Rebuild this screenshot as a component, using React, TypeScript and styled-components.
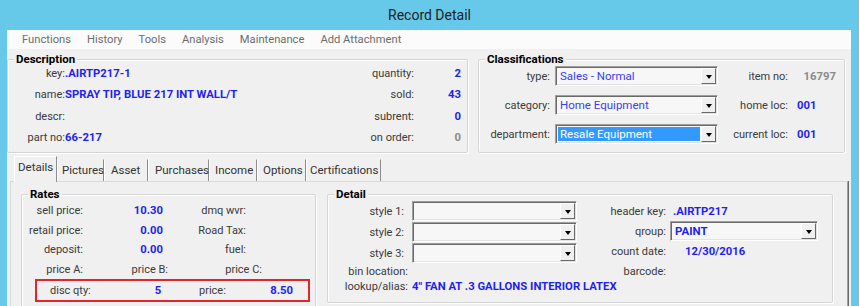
import React from 'react'
import styled, { createGlobalStyle } from 'styled-components'

const GlobalStyle = createGlobalStyle`
	html, body {
		margin: 0;
		padding: 0;
		background: #66c9ea;
		overflow: hidden;
	}
	body {
		font-family: Roboto, "Liberation Sans", Arial, sans-serif;
		font-size: 11px;
		color: #333;
	}
`

const Window = styled.div`
	width: 859px;
	height: 306px;
	background: #66c9ea;
	display: flex;
	flex-direction: column;
	overflow: hidden;
`
const TitleBar = styled.div`
	height: 30px;
	flex: none;
	display: flex;
	align-items: center;
	justify-content: center;
	font-size: 14px;
	color: #1e1e1e;
`
const Client = styled.div`
	flex: 1;
	min-height: 0;
	margin: 0 8px 0 7px;
	background: #f0f0f0;
	display: flex;
	flex-direction: column;
`
const MenuBar = styled.div`
	height: 19px;
	flex: none;
	background: #fbfbfb;
	display: flex;
	align-items: center;
	gap: 16px;
	padding-left: 15px;
	color: #6d6d6d;
	font-size: 11.2px;
`
const TopRow = styled.div`
	display: flex;
	gap: 10px;
	margin-top: 10px;
	flex: none;
`
const Group = styled.div<{ $w: number }>`
	width: ${p => p.$w}px;
	box-sizing: border-box;
	border: 1px solid #d5d5d5;
	border-radius: 2px;
	box-shadow: inset 1px 1px 0 #fff, 1px 1px 0 #fff;
	flex: none;
`
const Legend = styled.div`
	font-weight: bold;
	font-size: 11.5px;
	color: #000;
	line-height: 14px;
	margin: -8px 0 -3px 6px;
	padding: 0 2px;
	background: #f0f0f0;
	width: fit-content;
`
const DescGrid = styled.div`
	display: grid;
	grid-template-columns: 57px 1fr 80px 47px;
	grid-auto-rows: 21.3px;
	align-items: center;
	padding: 0 6px 4px 0;
`
const ClassGrid = styled.div`
	display: grid;
	grid-template-columns: 76px 163px 70px 1fr;
	grid-auto-rows: 20px;
	row-gap: 9px;
	align-items: center;
	margin-top: 3px;
	padding-bottom: 6px;
`
const Label = styled.div<{ $pad?: number; $nudge?: number; $left?: boolean }>`
	text-align: ${p => (p.$left ? 'left' : 'right')};
	padding-right: ${p => p.$pad ?? 0}px;
	margin-right: ${p => -(p.$nudge ?? 0)}px;
	white-space: nowrap;
	color: #3a3a3a;
`
const Value = styled.div<{ $tone?: 'blue' | 'gray'; $right?: boolean; $pad?: number }>`
	font-weight: bold;
	font-size: 11.3px;
	color: ${p => (p.$tone === 'gray' ? '#8a8a8a' : '#1f1ff2')};
	text-align: ${p => (p.$right ? 'right' : 'left')};
	padding-left: ${p => p.$pad ?? 0}px;
	white-space: nowrap;
`
const Select = styled.div<{ $w?: number }>`
	height: 20px;
	width: ${p => (p.$w ? `${p.$w}px` : 'auto')};
	box-sizing: border-box;
	display: flex;
	align-items: stretch;
	background: #f7f7f7;
	border: 1px solid;
	border-color: #a0a0a0 #fff #fff #a0a0a0;
	box-shadow: inset 1px 1px 0 #696969, inset -1px -1px 0 #e3e3e3;
	align-self: start;
`
const SelectText = styled.div<{ $sel?: boolean; $bold?: boolean }>`
	flex: 1;
	margin: 2px 1px 2px 2px;
	padding-left: 2px;
	display: flex;
	align-items: center;
	white-space: nowrap;
	overflow: hidden;
	font-size: 11.5px;
	font-weight: ${p => (p.$bold ? 'bold' : 'normal')};
	background: ${p => (p.$sel ? '#3399ff' : 'transparent')};
	color: ${p => (p.$sel ? '#fff' : p.$bold ? '#1f1ff2' : '#3b3bff')};
`
const DropButton = styled.div`
	width: 15px;
	margin: 1px 1px 1px 0;
	box-sizing: border-box;
	background: #f0f0f0;
	border: 1px solid;
	border-color: #fff #696969 #696969 #fff;
	display: flex;
	align-items: center;
	justify-content: center;
`
const Arrow = styled.div`
	width: 0;
	height: 0;
	border-left: 3.5px solid transparent;
	border-right: 3.5px solid transparent;
	border-top: 4px solid #000;
	margin-top: 1px;
`
const TabStrip = styled.div`
	display: flex;
	align-items: flex-end;
	height: 25px;
	margin-top: 3px;
	padding-left: 7px;
	flex: none;
	position: relative;
	z-index: 1;
`
const Tab = styled.div<{ $w: number; $active?: boolean; $pad?: number }>`
	width: ${p => p.$w}px;
	height: ${p => (p.$active ? 26 : 22)}px;
	box-sizing: border-box;
	padding-left: ${p => p.$pad ?? 5}px;
	padding-bottom: ${p => (p.$active ? 5 : 1)}px;
	display: flex;
	align-items: center;
	border-top: 1px solid ${p => (p.$active ? '#fff' : 'transparent')};
	border-left: 1px solid #fff;
	border-right: 1px solid #8c8c8c;
	background: #f0f0f0;
	margin-bottom: ${p => (p.$active ? -1 : 0)}px;
	color: #333;
	font-size: 11.5px;
	white-space: nowrap;
`
const Pane = styled.div`
	flex: 1;
	min-height: 0;
	margin: 0 3px 0 3px;
	border: 1px solid #d9d9d9;
	border-right: 1px solid #a0a0a0;
	box-shadow: 1px 0 0 #696969;
	border-bottom: none;
	display: flex;
	align-items: flex-start;
	gap: 11px;
	padding: 12px 14px 0 10px;
`
const RatesGrid = styled.div`
	display: grid;
	grid-template-columns: 61px 80px 83px 1fr;
	grid-auto-rows: 19.4px;
	align-items: center;
	margin-top: 3px;
`
const DiscBox = styled.div`
	margin: 0 5px 10px 13px;
	height: 23px;
	box-sizing: border-box;
	border: 2px solid #e0252b;
	display: grid;
	grid-template-columns: 93px 30px 1fr auto;
	align-items: center;
	padding: 0 15px 0 13px;
`
const DetailBody = styled.div`
	display: flex;
	margin-top: 3px;
	padding-bottom: 8px;
`
const DetailLeft = styled.div`
	width: 278px;
	flex: none;
	display: grid;
	grid-template-columns: 76px 165px;
	grid-template-rows: 21px 21px 21px 15px 15px;
	column-gap: 8px;
	align-items: center;
`
const DetailRight = styled.div`
	display: grid;
	grid-template-columns: 60px 148px;
	grid-auto-rows: 20px;
	column-gap: 4px;
	align-items: center;
`

const Combo = ({ text, sel, bold, w }: { text?: string; sel?: boolean; bold?: boolean; w?: number }) => (
	<Select $w={w}>
		<SelectText $sel={sel} $bold={bold}>{text}</SelectText>
		<DropButton>
			<Arrow />
		</DropButton>
	</Select>
)

const tabs = [
	{ name: 'Details', w: 43, pad: 3 },
	{ name: 'Pictures', w: 47, pad: 4 },
	{ name: 'Asset', w: 44, pad: 6 },
	{ name: 'Purchases', w: 61, pad: 6 },
	{ name: 'Income', w: 48, pad: 5 },
	{ name: 'Options', w: 49, pad: 5 },
	{ name: 'Certifications', w: 75, pad: 3 },
]

export default function App() {
	return (
		<Window>
			<GlobalStyle />
			<TitleBar>Record Detail</TitleBar>
			<Client>
				<MenuBar>
					<span>Functions</span>
					<span>History</span>
					<span>Tools</span>
					<span>Analysis</span>
					<span>Maintenance</span>
					<span>Add Attachment</span>
				</MenuBar>
				<TopRow>
					<Group $w={461}>
						<Legend>Description</Legend>
						<DescGrid>
							<Label>key:</Label>
							<Value>.AIRTP217-1</Value>
							<Label>quantity:</Label>
							<Value $right>2</Value>
							<Label>name:</Label>
							<Value>SPRAY TIP, BLUE 217 INT WALL/T</Value>
							<Label>sold:</Label>
							<Value $right>43</Value>
							<Label>descr:</Label>
							<Value />
							<Label>subrent:</Label>
							<Value $right>0</Value>
							<Label>part no:</Label>
							<Value>66-217</Value>
							<Label>on order:</Label>
							<Value $right $tone="gray">0</Value>
						</DescGrid>
					</Group>
					<Group $w={367}>
						<Legend>Classifications</Legend>
						<ClassGrid>
							<Label $pad={5}>type:</Label>
							<Combo text="Sales - Normal" />
							<Label>item no:</Label>
							<Value $tone="gray" $right style={{ paddingRight: 8 }}>16797</Value>
							<Label $pad={5}>category:</Label>
							<Combo text="Home Equipment" />
							<Label>home loc:</Label>
							<Value $pad={9}>001</Value>
							<Label $pad={5}>department:</Label>
							<Combo text="Resale Equipment" sel />
							<Label>current loc:</Label>
							<Value $pad={9}>001</Value>
						</ClassGrid>
					</Group>
				</TopRow>
				<TabStrip>
					{tabs.map((t, i) => (
						<Tab key={t.name} $w={t.w} $pad={t.pad} $active={i === 0}>
							{t.name}
						</Tab>
					))}
				</TabStrip>
				<Pane>
					<Group $w={295}>
						<Legend>Rates</Legend>
						<RatesGrid>
							<Label>sell price:</Label>
							<Value $right>10.30</Value>
							<Label>dmq wvr:</Label>
							<span />
							<Label>retail price:</Label>
							<Value $right>0.00</Value>
							<Label>Road Tax:</Label>
							<span />
							<Label>deposit:</Label>
							<Value $right>0.00</Value>
							<Label>fuel:</Label>
							<span />
							<Label>price A:</Label>
							<Label $nudge={5}>price B:</Label>
							<Label $nudge={16}>price C:</Label>
							<span />
						</RatesGrid>
						<DiscBox>
							<Label $left>disc qty:</Label>
							<Value style={{ textAlign: 'center' }}>5</Value>
							<Label $left style={{ paddingLeft: 26 }}>price:</Label>
							<Value $right>8.50</Value>
						</DiscBox>
					</Group>
					<Group $w={506}>
						<Legend>Detail</Legend>
						<DetailBody>
							<DetailLeft>
								<Label>style 1:</Label>
								<Combo />
								<Label>style 2:</Label>
								<Combo />
								<Label>style 3:</Label>
								<Combo />
								<Label $nudge={4}>bin location:</Label>
								<span />
								<Label $nudge={4}>lookup/alias:</Label>
								<Value>4" FAN AT .3 GALLONS INTERIOR LATEX</Value>
							</DetailLeft>
							<DetailRight>
								<Label>header key:</Label>
								<Value $pad={3}>.AIRTP217</Value>
								<Label>qroup:</Label>
								<Combo text="PAINT" bold />
								<Label>count date:</Label>
								<Value $pad={15}>12/30/2016</Value>
								<Label>barcode:</Label>
								<span />
							</DetailRight>
						</DetailBody>
					</Group>
				</Pane>
			</Client>
		</Window>
	)
}
